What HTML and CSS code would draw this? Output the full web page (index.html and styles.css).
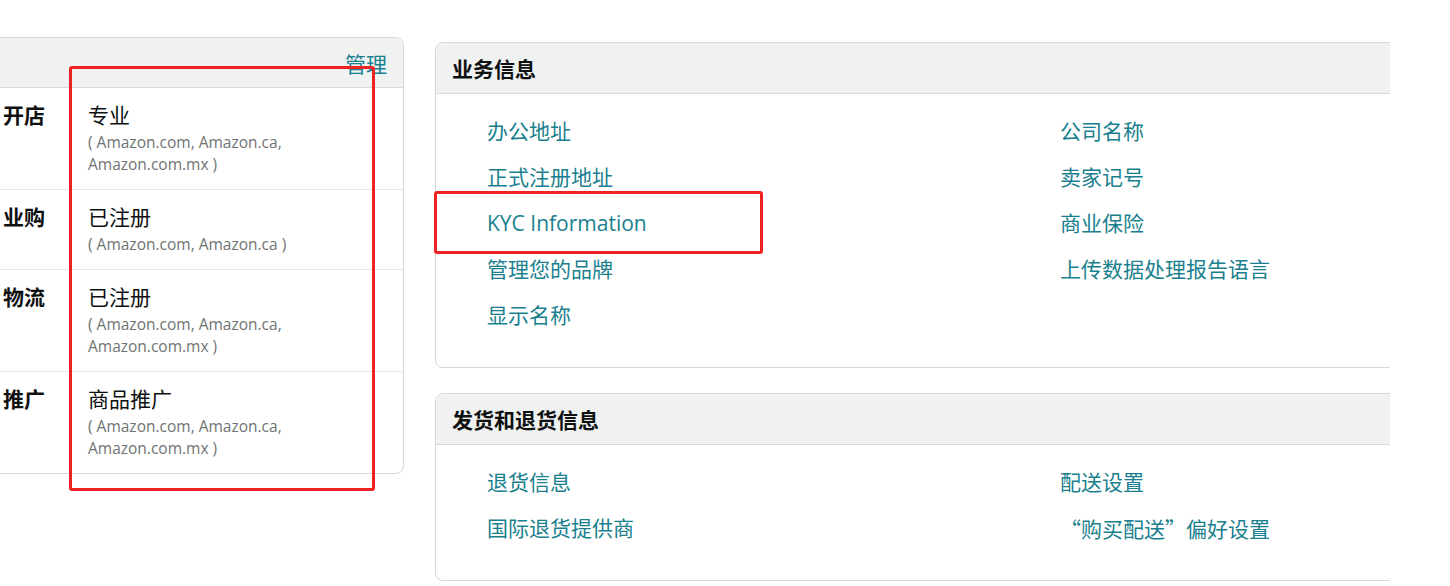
FILE: index.html
```html
<!DOCTYPE html>
<html lang="zh-CN">
<head>
<meta charset="UTF-8">
<meta name="viewport" content="width=device-width, initial-scale=1.0">
<title>账户信息</title>
<link rel="stylesheet" href="styles.css">
</head>
<body>

<div class="page">
    <div class="card services">
        <div class="card-head">
            <span></span>
            <a href="#" class="link">管理</a>
        </div>
        <div class="service-row">
            <div class="label">开店</div>
            <div class="value">
                <div class="value-main">专业</div>
                <div class="value-sub">( Amazon.com, Amazon.ca, Amazon.com.mx )</div>
            </div>
        </div>
        <div class="service-row">
            <div class="label">业购</div>
            <div class="value">
                <div class="value-main">已注册</div>
                <div class="value-sub">( Amazon.com, Amazon.ca )</div>
            </div>
        </div>
        <div class="service-row">
            <div class="label">物流</div>
            <div class="value">
                <div class="value-main">已注册</div>
                <div class="value-sub">( Amazon.com, Amazon.ca, Amazon.com.mx )</div>
            </div>
        </div>
        <div class="service-row">
            <div class="label">推广</div>
            <div class="value">
                <div class="value-main">商品推广</div>
                <div class="value-sub">( Amazon.com, Amazon.ca, Amazon.com.mx )</div>
            </div>
        </div>
    </div>

    <div class="right-col">
        <div class="card">
            <div class="card-head">业务信息</div>
            <div class="card-body">
                <div class="link-list">
                    <a href="#" class="link">办公地址</a>
                    <a href="#" class="link">正式注册地址</a>
                    <a href="#" class="link">KYC Information</a>
                    <a href="#" class="link">管理您的品牌</a>
                    <a href="#" class="link">显示名称</a>
                </div>
                <div class="link-list">
                    <a href="#" class="link">公司名称</a>
                    <a href="#" class="link">卖家记号</a>
                    <a href="#" class="link">商业保险</a>
                    <a href="#" class="link">上传数据处理报告语言</a>
                </div>
            </div>
        </div>

        <div class="card">
            <div class="card-head">发货和退货信息</div>
            <div class="card-body">
                <div class="link-list">
                    <a href="#" class="link">退货信息</a>
                    <a href="#" class="link">国际退货提供商</a>
                </div>
                <div class="link-list">
                    <a href="#" class="link">配送设置</a>
                    <a href="#" class="link cjk">“购买配送”偏好设置</a>
                </div>
            </div>
        </div>
    </div>
</div>

<!-- annotation boxes drawn over the screenshot -->
<div class="mark mark-services"></div>
<div class="mark mark-kyc"></div>

</body>
</html>
```

FILE: styles.css
```css
body {
    margin: 0;
    background-color: #fff;
    font-family: "Open Sans", "Noto Sans CJK SC", sans-serif;
    color: #0f1111;
    overflow: hidden;
}
.page {
    display: flex;
    align-items: flex-start;
    width: 1390px;
    height: 586px;
    overflow: hidden;
}
.card {
    border: 1px solid #d5d9d9;
    border-radius: 8px;
    background-color: #fff;
    overflow: hidden;
}
.card-head {
    display: flex;
    justify-content: space-between;
    align-items: center;
    height: 50px;
    padding: 0 16px;
    background-color: #f0f2f2;
    border-bottom: 1px solid #d5d9d9;
    font-size: 21px;
    font-weight: bold;
}
.link {
    color: #1a7f8e;
    text-decoration: none;
    font-weight: normal;
}
.cjk {
    font-family: "Noto Sans CJK SC", sans-serif;
}
.services {
    flex: none;
    width: 522px;
    margin-left: -120px;
    margin-top: 37px;
}
.services .card-head {
    height: 49px;
}
.service-row {
    display: grid;
    grid-template-columns: 148px 1fr;
    column-gap: 43px;
    padding: 15px 16px 14px;
    border-bottom: 1px solid #e3e6e6;
}
.service-row:first-of-type {
    padding-top: 17px;
    padding-bottom: 13px;
}
.service-row:last-child {
    border-bottom: none;
}
.label {
    text-align: right;
    font-size: 21px;
    font-weight: bold;
    line-height: 24px;
}
.value-main {
    font-size: 21px;
    line-height: 24px;
    margin-bottom: 4px;
}
.value-sub {
    width: 300px;
    font-size: 15.5px;
    line-height: 22px;
    color: #6f7373;
}
.right-col {
    flex: none;
    display: flex;
    flex-direction: column;
    gap: 25px;
    width: 1200px;
    margin-left: 31px;
    margin-top: 42px;
}
.card-body {
    display: grid;
    grid-template-columns: 573px 1fr;
    padding: 14px 51px 29px;
}
.link-list {
    display: flex;
    flex-direction: column;
}
.link-list .link {
    font-size: 21px;
    line-height: 46px;
}
.mark {
    position: absolute;
    border: 3px solid #ee2222;
    border-radius: 3px;
}
.mark-services {
    left: 69px;
    top: 66px;
    width: 300px;
    height: 419px;
}
.mark-kyc {
    left: 434px;
    top: 191px;
    width: 323px;
    height: 57px;
}
```
